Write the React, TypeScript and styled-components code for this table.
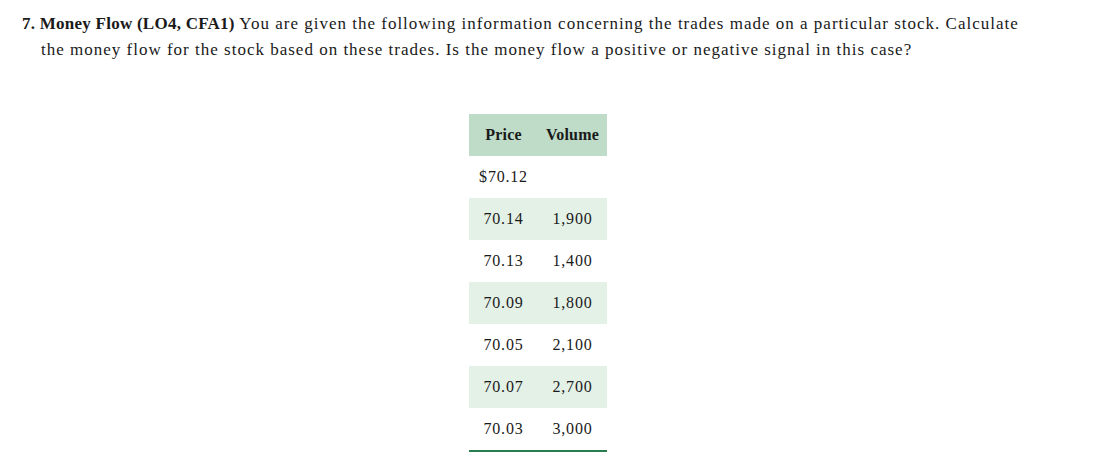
import styled, { createGlobalStyle } from "styled-components";

const Global = createGlobalStyle`
  body {
    margin: 0;
    background: #ffffff;
    font-family: "Liberation Serif", "Times New Roman", serif;
    color: #1a1a1a;
  }
`;

const Page = styled.div`
  padding: 11px 20px 0 22px;
`;

const Question = styled.p`
  margin: 0;
  max-width: 1005px;
  padding-left: 19px;
  text-indent: -19px;
  font-size: 17px;
  line-height: 26px;
  letter-spacing: 1px;
`;

const Lead = styled.b`
  font-weight: bold;
  letter-spacing: 0.25px;
`;

const Table = styled.table`
  margin: 51px 0 0 447px;
  border-collapse: collapse;
  font-size: 16px;
  border-bottom: 2px solid #2a7d4e;
`;

const HeadCell = styled.th`
  background: #bedcc8;
  height: 42px;
  width: 69px;
  padding: 0;
  font-weight: bold;
  text-align: center;
  letter-spacing: 0.2px;
`;

const Row = styled.tr<{ $shade: boolean }>`
  background: ${(p) => (p.$shade ? "#e4f1e7" : "#ffffff")};
`;

const Cell = styled.td`
  height: 42px;
  padding: 0;
  text-align: center;
  letter-spacing: 0.8px;
`;

const rows: [string, string][] = [
  ["$70.12", ""],
  ["70.14", "1,900"],
  ["70.13", "1,400"],
  ["70.09", "1,800"],
  ["70.05", "2,100"],
  ["70.07", "2,700"],
  ["70.03", "3,000"],
];

export default function App() {
  return (
    <Page>
      <Global />
      <Question>
        <Lead>7. Money Flow (LO4, CFA1)</Lead> You are given the following
        information concerning the trades made on a particular stock. Calculate
        the money flow for the stock based on these trades. Is the money flow a
        positive or negative signal in this case?
      </Question>
      <Table>
        <thead>
          <tr>
            <HeadCell>Price</HeadCell>
            <HeadCell>Volume</HeadCell>
          </tr>
        </thead>
        <tbody>
          {rows.map(([price, volume], i) => (
            <Row key={price} $shade={i % 2 === 1}>
              <Cell>{price}</Cell>
              <Cell>{volume}</Cell>
            </Row>
          ))}
        </tbody>
      </Table>
    </Page>
  );
}
